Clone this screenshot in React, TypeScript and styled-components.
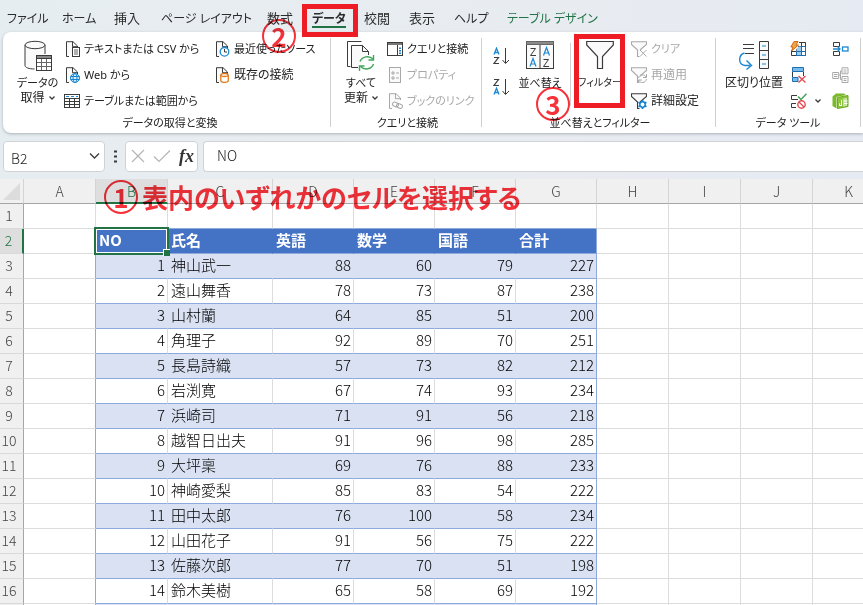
import React, { useEffect, useState } from 'react';
import styled, { createGlobalStyle, css } from 'styled-components';

const GlobalStyle = createGlobalStyle`
  * { box-sizing: border-box; }
  body { margin: 0; overflow: hidden; }
  button, input { font: inherit; color: inherit; }
  svg { display: block; flex: none; }
`;

const ink = '#3b3b3b';
const blue = '#1e88d2';
const green = '#217346';
const red = '#ee1c25';
const mute = '#a8a8a8';
const note = '#f5323a';

/* ---------- shell ---------- */

const Shell = styled.div`
  position: relative;
  display: flex;
  flex-direction: column;
  height: 100vh;
  overflow: hidden;
  background: linear-gradient(100deg, #e6edf0 0%, #e8ecf1 60%, #e5e9f2 100%);
  color: #222;
  font-family: 'Noto Sans', 'Noto Sans CJK JP', sans-serif;
  font-size: 12px;
  font-feature-settings: 'palt';
`;

const TabBar = styled.nav`
  display: flex;
  flex: none;
  height: 32px;
  padding-left: 7px;
`;

const TabSlot = styled.div<{ $w: number }>`
  position: relative;
  flex: 0 0 ${p => p.$w}px;
`;

const Tab = styled.button<{ $active?: boolean; $accent?: boolean; $kanji?: boolean }>`
  padding: ${p => (p.$kanji ? 8 : 9)}px 0 0;
  height: 28px;
  border: 0;
  background: none;
  white-space: nowrap;
  font-size: ${p => (p.$kanji ? 13 : 12)}px;
  line-height: 20px;
  color: ${p => (p.$accent ? green : '#2b2b2b')};
  ${p => p.$active && css`
    font-weight: 700;
    box-shadow: inset 0 -2px ${green};
  `}
`;

const Marker = styled.span<{ $inset: string }>`
  position: absolute;
  inset: ${p => p.$inset};
  z-index: 2;
  border: 5px solid ${red};
  pointer-events: none;
`;

/* ---------- ribbon ---------- */

const Ribbon = styled.section`
  display: flex;
  flex: none;
  height: 101px;
  margin-left: 3px;
  padding: 6px 0;
  background: #fff;
  border-radius: 8px 0 0 8px;
  box-shadow: 0 1px 3px rgba(60, 70, 80, 0.35);
`;

const Group = styled.div<{ $w: number; $pad: number }>`
  display: flex;
  flex-direction: column;
  flex: 0 0 ${p => p.$w}px;
  min-width: 0;
  padding-left: ${p => p.$pad}px;
  border-right: 1px solid #d0d0d0;
`;

const GroupBody = styled.div`
  display: flex;
  flex: none;
  height: 77px;
`;

const GroupLabel = styled.div<{ $pad: number }>`
  padding-right: ${p => p.$pad}px;
  font-size: 11px;
  line-height: 16px;
  text-align: center;
  white-space: nowrap;
`;

const BigButton = styled.button<{ $w: number }>`
  position: relative;
  display: flex;
  flex-direction: column;
  align-items: center;
  flex: 0 0 ${p => p.$w}px;
  min-width: 0;
  padding: 2px 0 0;
  border: 0;
  background: none;
  line-height: 15px;
  white-space: nowrap;
`;

const BigText = styled.span<{ $size?: number }>`
  display: flex;
  align-items: center;
  gap: 4px;
  font-size: ${p => p.$size ?? 12}px;
`;

const BigIcon = styled.span`
  height: 35px;
`;

const Stack = styled.div<{ $w: number; $left?: number }>`
  display: flex;
  flex-direction: column;
  flex: 0 0 ${p => p.$w}px;
  min-width: 0;
  margin-left: ${p => p.$left ?? 0}px;
  padding-top: 2px;
  gap: 8px;
`;

const SmallButton = styled.button<{ $size?: number }>`
  display: flex;
  align-items: center;
  gap: 4px;
  height: 18px;
  padding: 0;
  border: 0;
  background: none;
  white-space: nowrap;
  font-size: ${p => p.$size ?? 12}px;
  line-height: 18px;
  &:disabled { color: ${mute}; }
`;

const SortStack = styled.div`
  display: flex;
  flex-direction: column;
  gap: 13px;
  padding-top: 9px;
  flex: 0 0 24px;
`;

const IconButton = styled.button`
  display: flex;
  align-items: center;
  gap: 8px;
  min-height: 18px;
  padding: 0;
  border: 0;
  background: none;
`;

const InnerRule = styled.span`
  flex: 0 0 1px;
  margin: 5px 8px 9px 7px;
  background: #d0d0d0;
`;

/* ---------- formula bar ---------- */

const FormulaBar = styled.div`
  display: flex;
  flex: none;
  align-items: center;
  height: 46px;
  padding: 0 0 0 3px;
  font-size: 14px;
`;

const Field = styled.div<{ $w?: number }>`
  display: flex;
  align-items: center;
  flex: ${p => (p.$w ? `0 0 ${p.$w}px` : '1')};
  min-width: 0;
  height: 31px;
  border: 1px solid #d0d3d6;
  border-radius: 4px;
  background: #fff;
`;

const FormulaField = styled(Field)`
  margin-left: 5px;
  border-right: 0;
  border-radius: 4px 0 0 4px;
`;

const NameInput = styled.input`
  flex: 1;
  width: 100%;
  min-width: 0;
  padding: 3px 0 0 7px;
  border: 0;
  background: none;
  outline: 0;
  font-family: 'Noto Sans CJK JP', sans-serif;
  font-weight: 300;
`;

const NameArrow = styled(IconButton)`
  padding-right: 4px;
`;

const FormulaInput = styled(NameInput)`
  padding: 0 0 2px 13px;
`;

const Dots = styled.span`
  display: flex;
  justify-content: center;
  flex: 0 0 20px;
`;

/* ---------- sheet ---------- */

const SheetArea = styled.main`
  position: relative;
  flex: 1;
  min-height: 0;
  overflow: hidden;
  background: #fff;
`;

const Sheet = styled.table`
  width: 0;
  table-layout: fixed;
  border-collapse: separate;
  border-spacing: 0;
  font-family: 'Noto Sans CJK JP', sans-serif;
  font-size: 15px;
  font-weight: 300;
  font-feature-settings: normal;
  color: #000;
`;

const Col = styled.col<{ $w: number }>`
  width: ${p => p.$w}px;
`;

const Corner = styled.td`
  height: 25px;
  padding: 0 3px 3px 0;
  border-right: 1px solid #d4d4d4;
  border-bottom: 1px solid #a6a6a6;
  background: #f0f0f0;
  vertical-align: bottom;
  svg { margin-left: auto; }
`;

const ColHead = styled.th<{ $on: boolean }>`
  height: 25px;
  padding: 0;
  border-right: 1px solid #d4d4d4;
  border-bottom: ${p => (p.$on ? `2px solid ${green}` : '1px solid #a6a6a6')};
  background: ${p => (p.$on ? '#dedede' : '#f0f0f0')};
  color: ${p => (p.$on ? green : '#444')};
  font-size: 14px;
  font-weight: 300;
  line-height: 20px;
`;

const RowHead = styled.th<{ $on: boolean }>`
  height: 25px;
  padding: 0 5px 2px 0;
  border-right: ${p => (p.$on ? `2px solid ${green}` : '1px solid #a6a6a6')};
  border-bottom: 1px solid #d9d9d9;
  background: ${p => (p.$on ? '#dedede' : '#f0f0f0')};
  color: ${p => (p.$on ? green : '#444')};
  font-size: 14px;
  font-weight: 300;
  line-height: 20px;
`;

type Kind = 'plain' | 'head' | 'band' | 'white';

const fills: Record<Kind, string> = { plain: '#fff', head: '#4472c4', band: '#d9e1f2', white: '#fff' };

const Cell = styled.td<{ $kind: Kind; $right?: boolean; $edge?: boolean; $ruled?: boolean }>`
  position: relative;
  height: 25px;
  padding: 0 2px 2px 3px;
  background: ${p => fills[p.$kind]};
  border-bottom: 1px solid ${p => (p.$kind === 'plain' && !p.$ruled ? '#dcdcdc' : '#8ea9db')};
  border-right: 1px solid ${p =>
    p.$edge ? '#8ea9db' : p.$kind === 'plain' || p.$kind === 'white' ? '#dcdcdc' : fills[p.$kind]};
  color: ${p => (p.$kind === 'head' ? '#fff' : '#000')};
  font-weight: ${p => (p.$kind === 'head' ? 700 : 300)};
  text-align: ${p => (p.$right ? 'right' : 'left')};
  line-height: 20px;
  white-space: nowrap;
`;

const Selection = styled.span`
  position: absolute;
  inset: -2px;
  z-index: 1;
  border: 2px solid ${green};
  box-shadow: inset 0 0 0 1px #fff;
  &::after {
    content: '';
    position: absolute;
    right: -3px;
    bottom: -3px;
    width: 6px;
    height: 6px;
    border: solid #fff;
    border-width: 1px 0 0 1px;
    background: ${green};
  }
`;

/* ---------- callouts ---------- */

const Badge = styled.span`
  display: flex;
  align-items: center;
  justify-content: center;
  flex: none;
  width: 34px;
  height: 34px;
  border: 2px solid ${note};
  border-radius: 50%;
  line-height: 30px;
`;

const Callout = styled.div<{ $x: number; $y: number }>`
  position: absolute;
  left: ${p => p.$x}px;
  top: ${p => p.$y}px;
  z-index: 3;
  display: flex;
  align-items: center;
  gap: 4px;
  pointer-events: none;
  mix-blend-mode: multiply;
  white-space: nowrap;
  color: ${note};
  font-family: 'Noto Sans CJK JP', sans-serif;
  font-size: 26px;
  font-weight: 700;
  line-height: 32px;
`;

/* ---------- icons ---------- */

const Svg = ({ w, h, children }: { w: number; h: number; children: React.ReactNode }) => (
  <svg width={w} height={h} viewBox={`0 0 ${w} ${h}`} fill="none" stroke={ink} aria-hidden="true">
    {children}
  </svg>
);

const Chevron = ({ w = 6 }: { w?: number }) => (
  <Svg w={w} h={6}>
    <path d={w > 6 ? 'M1 .5l4.500 4.500 4.500-4.500' : 'M.5 1.500L3 4l2.500-2.500'} strokeWidth="1.300" />
  </Svg>
);

const DatabaseIcon = () => (
  <Svg w={28} h={32}>
    <path d="M1 5h20v10H12v14C5 29 1 27.500 1 25.500z" fill="#fafafa" stroke="none" />
    <path d="M1 5v20.500c0 2 4 3.500 9.500 3.500M21 5v9" />
    <ellipse cx="11" cy="5" rx="10" ry="3.700" fill="#fafafa" />
    <rect x="12.500" y="15.500" width="15" height="15" fill="#fff" />
    <rect x="12.500" y="15.500" width="15" height="3" fill="#8a8a8a" />
    <path d="M13 22.500h14M13 26.500h14M17.500 19v11M22.500 19v11" stroke="#666" />
  </Svg>
);

const RefreshIcon = () => (
  <Svg w={30} h={32}>
    <path d="M4.500 26.500h-3v-25h14" />
    <path d="M12 27.500H5.500v-22h11l6 6V15" fill="#fafafa" />
    <path d="M16.500 5.500v6h6" />
    <path d="M14 21.500c2-5 9-6.500 13-2.500M27.500 24c-2 5.500-9 6.500-13 2.500" stroke="#3fa55a" strokeWidth="1.400" />
    <path d="M27.500 15v5h-5M13.500 31v-5h5" stroke="#3fa55a" strokeWidth="1.400" />
  </Svg>
);

const SortIcon = () => (
  <Svg w={28} h={30}>
    <rect x=".5" y="1.500" width="27" height="27" fill="#fafafa" />
    <rect x=".5" y="1.500" width="27" height="3" fill="#8a8a8a" stroke="#666" />
    <path d="M14 5v24" />
    <path d="M4.500 8.500h5l-5 7h5.500M17.500 19.500h5l-5 7h5.500" />
    <path d="M4 26.500l3-8 3 8M5 24h4M17.500 15.500l3-8 3 8M18.500 13h4" stroke={blue} strokeWidth="1.200" />
  </Svg>
);

const FilterIcon = () => (
  <Svg w={28} h={30}>
    <path d="M.7 1.500h26.600v3.500L16.500 16.500v12h-5v-12L.7 5z" fill="#fafafa" strokeWidth="1.200" />
  </Svg>
);

const SplitIcon = () => (
  <Svg w={32} h={30}>
    <path d="M5 4.500h11M5 8.500h11M7 13.500h9" />
    <path d="M6.500 13C0 15 0 25 7 25.500h5M8.500 20.500l5 5-5 4" stroke={blue} strokeWidth="1.400" />
    <path d="M21.500 1.500h9v27h-9zM21.500 10.500h9M21.500 19.500h9" fill="#fafafa" />
    <path d="M24 6h4M24 15h4M24 24h4" stroke={blue} />
  </Svg>
);

const PagePath = ({ c = ink }: { c?: string }) => (
  <>
    <path d="M5 15.500H2.500V.7H9L13.500 5v2" stroke={c} fill="#fafafa" />
    <path d="M8.500.7v5h5" stroke={c} />
  </>
);

const CsvIcon = () => (
  <Svg w={16} h={16}>
    <PagePath />
    <rect x="8.500" y="6.500" width="7" height="9" fill="#fff" />
    <path d="M10 9h4M10 11h4M10 13h4" strokeWidth=".8" />
  </Svg>
);

const WebIcon = () => (
  <Svg w={16} h={16}>
    <PagePath />
    <circle cx="11" cy="11" r="4.500" fill="#d8eefb" stroke="#1683d0" />
    <path d="M6.500 9.500h9M6.500 12.500h9" stroke="#1683d0" />
    <ellipse cx="11" cy="11" rx="2" ry="4.500" stroke="#1683d0" />
  </Svg>
);

const TableIcon = () => (
  <Svg w={16} h={16}>
    <rect x=".5" y="1.500" width="15" height="13" />
    <path d="M1 5.500h14M1 8.500h14M1 11.500h14M5.500 5v9M10.500 5v9" />
    <path d="M2 3.500h3M7 3.500h3M12 3.500h2" stroke={blue} />
  </Svg>
);

const RecentIcon = () => (
  <Svg w={16} h={16}>
    <PagePath />
    <circle cx="10.500" cy="10.800" r="4.300" fill="#fff" stroke={blue} strokeWidth="1.300" />
    <path d="M10.500 8v3h2.500" />
  </Svg>
);

const ExistingIcon = () => (
  <Svg w={16} h={16}>
    <PagePath />
    <path d="M6.800 8v5.500c0 2.500 7.500 2.500 7.500 0V8" fill="#fff" stroke="#e27a1c" strokeWidth="1.300" />
    <ellipse cx="10.500" cy="8" rx="3.700" ry="1.500" fill="#fff" stroke="#e27a1c" strokeWidth="1.300" />
  </Svg>
);

const QueryIcon = () => (
  <Svg w={16} h={16}>
    <rect x=".5" y="1.500" width="15" height="13" fill="#fff" />
    <path d="M1 3h14" strokeWidth="2" stroke="#777" />
    <path d="M10.500 4v10" />
    <path d="M13 6.500v1.500M13 9v1.500M13 11.500v1.500" stroke={blue} strokeWidth="2" />
  </Svg>
);

const PropertyIcon = () => (
  <Svg w={16} h={16}>
    <rect x="2.500" y=".5" width="11" height="15" stroke={mute} fill="#fafafa" />
    <path d="M5 5h2v2H5zM5 10h2v2H5zM9 6h3M9 11h3" stroke={mute} />
  </Svg>
);

const LinkIcon = () => (
  <Svg w={16} h={16}>
    <PagePath c={mute} />
    <rect x="5.500" y="9.500" width="6" height="4" rx="2" stroke={mute} transform="rotate(20 8.500 11.500)" fill="#fff" />
    <rect x="9.500" y="11" width="6" height="4" rx="2" stroke={mute} transform="rotate(20 12.500 13)" />
  </Svg>
);

const AzIcon = ({ desc }: { desc?: boolean }) => (
  <Svg w={17} h={18}>
    <g transform={desc ? 'translate(0 9)' : undefined}>
      <path d="M1 7.500L3.500 1.200 6 7.500M2 5.500h3" stroke={blue} strokeWidth="1.300" />
    </g>
    <g transform={desc ? 'translate(0 -9)' : undefined}>
      <path d="M1 10.500h4.500L1 16.500h5" strokeWidth="1.200" />
    </g>
    <path d="M12.500 1v15M9.500 13l3 3.500 3.500-3.500" />
  </Svg>
);

const Funnel = ({ c = ink }: { c?: string }) => (
  <path d="M9.500 9.500v-1l6-5V.7H.5v2.800l6 5.500v6.500h2" stroke={c} fill="#fafafa" strokeWidth="1.100" />
);

const ClearIcon = () => (
  <Svg w={16} h={16}>
    <Funnel c={mute} />
    <path d="M9 9l6.500 6.500M15.500 9L9 15.500" stroke={mute} />
  </Svg>
);

const ReapplyIcon = () => (
  <Svg w={16} h={16}>
    <Funnel c={mute} />
    <path d="M7.500 11c1-4 6-4 7.500-1M15.500 12c-1 4.500-6 4.500-7.500 1.500M15.500 7v3.500H12M7.500 16v-3H11" stroke={mute} />
  </Svg>
);

const AdvancedIcon = () => (
  <Svg w={16} h={16}>
    <Funnel />
    <circle cx="11.500" cy="11.500" r="2.700" stroke="#1683d0" strokeWidth="1.500" fill="#fff" />
    <path d="M11.500 7v2M11.500 14v2M7.500 9.300l1.800 1M13.700 12.700l1.800 1M7.500 13.700l1.800-1M13.700 10.300l1.800-1" stroke="#1683d0" strokeWidth="1.800" />
  </Svg>
);

const FlashFillIcon = () => (
  <Svg w={17} h={16}>
    <path d="M9 1.500h6.500v13h-14V9M8 5.500h7M1.500 10.500h14M6.500 8v6M11.500 2v12" />
    <path d="M6.500 8l2-2.500h3v9h-5z" fill="#9ccdf0" stroke="none" />
    <path d="M11.500 5.500h4v9h-9v-4h9M11.500 5.500v9" stroke="#1d6fb0" />
    <path d="M4 .5h4L6 4h2.500L1.500 10l1.500-4H.8z" fill="#f2a34a" stroke="#d3690f" />
  </Svg>
);

const DuplicatesIcon = () => (
  <Svg w={17} h={16}>
    <path d="M2.500.5h11v4h-11zM2.500 10.500H8v4H2.500z" fill="#7cbbe8" stroke="#1d6fb0" />
    <path d="M2.500 5v5M13.500 5v4" />
    <path d="M8.500 9l7 6.500M15.500 9l-7 6.500" stroke="#e5484d" strokeWidth="1.300" />
  </Svg>
);

const ValidationIcon = () => (
  <Svg w={17} h={16}>
    <path d="M7 2.500H1.500v4H8M6 10.500H1.500v4H6" />
    <path d="M8 3.500l3 3L16.500.8" stroke="#3fa55a" strokeWidth="1.500" />
    <circle cx="11.500" cy="11.500" r="3.700" stroke="#e5484d" strokeWidth="1.400" fill="#fff" />
    <path d="M9 9l5 5" stroke="#e5484d" strokeWidth="1.300" />
  </Svg>
);

const ConsolidateIcon = () => (
  <Svg w={17} h={16}>
    <path d="M7.500 5.500V1.500h-6v4zM7.500 10.500v4h-6v-4z" />
    <path d="M1 8h7M5.500 5.500L8 8l-2.500 2.500" stroke={blue} strokeWidth="1.300" />
    <rect x="10.500" y="6" width="5.500" height="4" stroke={blue} strokeWidth="1.300" />
  </Svg>
);

const RelationIcon = () => (
  <Svg w={17} h={16}>
    <path d="M.7 5.500h6v6h-6zM10 .8h6v6h-6zM10 9.500h6v6h-6zM7 8h1.500V4H10M8.500 8v4.500H10" stroke={mute} />
    <path d="M2 7.500h3.500M2 9.500h3.500M11.500 3h3M11.500 5h3M11.500 11.700h3M11.500 13.500h3" stroke={mute} />
  </Svg>
);

const ModelIcon = () => (
  <Svg w={17} h={16}>
    <path d="M.5 3.500L4 .5h8l2 1.500-9.500 2V15.500L.5 13z" fill="#7ab929" stroke="none" />
    <path d="M5.500 4.500l10.500-2v11l-10.500 2z" fill="#8cc63f" stroke="#6ba81f" />
    <path d="M9.500 7v5.500H7.500v-2M12 5.500v8M14 5v8M12 8h3.500M12 10.500h3.500" stroke="#fff" />
  </Svg>
);

/* ---------- data ---------- */

const tabs: { text: string; w: number; active?: boolean; accent?: boolean; kanji?: boolean }[] = [
  { text: 'ファイル', w: 55 },
  { text: 'ホーム', w: 52 },
  { text: '挿入', w: 47, kanji: true },
  { text: 'ページ レイアウト', w: 106 },
  { text: '数式', w: 45, kanji: true },
  { text: 'データ', w: 52, active: true },
  { text: '校閲', w: 45, kanji: true },
  { text: '表示', w: 45, kanji: true },
  { text: 'ヘルプ', w: 53 },
  { text: 'テーブル デザイン', w: 96, accent: true },
];

const alphabet = 'ABCDEFGHIJKLMNOPQRSTUVWXYZ'.split('');
const headWidth = 24;
const rowHeight = 25;
const barsHeight = 179;
const colWidth = (l: string) => (l === 'C' ? 105 : 'DEFG'.includes(l) ? 81 : 72);

const titles = ['NO', '氏名', '英語', '数学', '国語', '合計'];
const records: [string, number, number, number, number][] = [
  ['神山武一', 88, 60, 79, 227],
  ['遠山舞香', 78, 73, 87, 238],
  ['山村蘭', 64, 85, 51, 200],
  ['角理子', 92, 89, 70, 251],
  ['長島詩織', 57, 73, 82, 212],
  ['岩渕寛', 67, 74, 93, 234],
  ['浜崎司', 71, 91, 56, 218],
  ['越智日出夫', 91, 96, 98, 285],
  ['大坪稟', 69, 76, 88, 233],
  ['神崎愛梨', 85, 83, 54, 222],
  ['田中太郎', 76, 100, 58, 234],
  ['山田花子', 91, 56, 75, 222],
  ['佐藤次郎', 77, 70, 51, 198],
  ['鈴木美樹', 65, 58, 69, 192],
];
const lastTableRow = 17;

/* Only the columns and rows that fit in the window are rendered. */
const measure = () => {
  let x = headWidth;
  const letters = alphabet.filter(l => {
    const visible = x < window.innerWidth;
    x += colWidth(l);
    return visible;
  });
  const space = window.innerHeight - barsHeight - rowHeight;
  return { letters, rows: Math.max(1, Math.floor(space / rowHeight)) };
};

const useVisibleRange = () => {
  const [range, setRange] = useState(measure);
  useEffect(() => {
    const update = () => setRange(measure());
    window.addEventListener('resize', update);
    return () => window.removeEventListener('resize', update);
  }, []);
  return range;
};

const cellValue = (row: number, col: number): string | number => {
  if (row === 2) return titles[col];
  const rec = records[row - 3];
  if (!rec) return '';
  return col === 0 ? row - 2 : rec[col - 1];
};

const SheetCell = ({ row, letter }: { row: number; letter: string }) => {
  const col = alphabet.indexOf(letter) - 1;
  const inside = row >= 2 && row <= lastTableRow && col >= 0 && col < 6;
  if (!inside) {
    const leftOfTable = letter === 'A' && row >= 2 && row <= lastTableRow;
    return <Cell $kind="plain" $edge={leftOfTable} $ruled={row === 1 && col >= 0 && col < 6} />;
  }
  const kind: Kind = row === 2 ? 'head' : row % 2 ? 'band' : 'white';
  return (
    <Cell $kind={kind} $right={row > 2 && col !== 1} $edge={col === 5}>
      {cellValue(row, col)}
      {row === 2 && col === 0 && <Selection />}
    </Cell>
  );
};

const SheetView = () => {
  const { letters, rows } = useVisibleRange();
  const numbers = Array.from({ length: rows }, (_, i) => i + 1);
  return (
    <Sheet>
      <colgroup>
        <Col $w={headWidth} />
        {letters.map(l => <Col key={l} $w={colWidth(l)} />)}
      </colgroup>
      <thead>
        <tr>
          <Corner>
            <svg width="17" height="17" viewBox="0 0 17 17" aria-hidden="true">
              <path d="M17 0v17H0z" fill="#dcdcdc" />
            </svg>
          </Corner>
          {letters.map(l => <ColHead key={l} scope="col" $on={l === 'B'}>{l}</ColHead>)}
        </tr>
      </thead>
      <tbody>
        {numbers.map(r => (
          <tr key={r}>
            <RowHead scope="row" $on={r === 2}>{r}</RowHead>
            {letters.map(l => <SheetCell key={l} row={r} letter={l} />)}
          </tr>
        ))}
        <tr>
          <RowHead scope="row" $on={false} />
          {letters.map(l => <SheetCell key={l} row={rows + 1} letter={l} />)}
        </tr>
      </tbody>
    </Sheet>
  );
};

export default function App() {
  return (
    <Shell>
      <GlobalStyle />
      <TabBar>
        {tabs.map(t => (
          <TabSlot key={t.text} $w={t.w}>
            <Tab $active={t.active} $accent={t.accent} $kanji={t.kanji}>{t.text}</Tab>
            {t.active && <Marker $inset="4px 6px -5px -10px" />}
          </TabSlot>
        ))}
      </TabBar>

      <Ribbon>
        <Group $w={328} $pad={11}>
          <GroupBody>
            <BigButton $w={47}>
              <BigIcon><DatabaseIcon /></BigIcon>
              <BigText $size={11}>データの</BigText>
              <BigText>取得<Chevron /></BigText>
            </BigButton>
            <Stack $w={150} $left={3}>
              <SmallButton $size={11}><CsvIcon />テキストまたは CSV から</SmallButton>
              <SmallButton $size={11}><WebIcon />Web から</SmallButton>
              <SmallButton $size={11}><TableIcon />テーブルまたは範囲から</SmallButton>
            </Stack>
            <Stack $w={110}>
              <SmallButton $size={11}><RecentIcon />最近使ったソース</SmallButton>
              <SmallButton><ExistingIcon />既存の接続</SmallButton>
            </Stack>
          </GroupBody>
          <GroupLabel $pad={4}>データの取得と変換</GroupLabel>
        </Group>

        <Group $w={151} $pad={7}>
          <GroupBody>
            <BigButton $w={46}>
              <BigIcon><RefreshIcon /></BigIcon>
              <BigText $size={11}>すべて</BigText>
              <BigText>更新<Chevron /></BigText>
            </BigButton>
            <Stack $w={90} $left={3}>
              <SmallButton $size={11}><QueryIcon />クエリと接続</SmallButton>
              <SmallButton $size={11} disabled><PropertyIcon />プロパティ</SmallButton>
              <SmallButton $size={11} disabled><LinkIcon />ブックのリンク</SmallButton>
            </Stack>
          </GroupBody>
          <GroupLabel $pad={4}>クエリと接続</GroupLabel>
        </Group>

        <Group $w={234} $pad={11}>
          <GroupBody>
            <SortStack>
              <IconButton aria-label="昇順"><AzIcon /></IconButton>
              <IconButton aria-label="降順"><AzIcon desc /></IconButton>
            </SortStack>
            <BigButton $w={46}>
              <BigIcon><SortIcon /></BigIcon>
              <BigText $size={11}>並べ替え</BigText>
            </BigButton>
            <InnerRule />
            <BigButton $w={42}>
              <BigIcon><FilterIcon /></BigIcon>
              <BigText $size={10}>フィルター</BigText>
              <Marker $inset="-4px -4px 7px -5px" />
            </BigButton>
            <Stack $w={80} $left={10}>
              <SmallButton $size={11} disabled><ClearIcon />クリア</SmallButton>
              <SmallButton disabled><ReapplyIcon />再適用</SmallButton>
              <SmallButton><AdvancedIcon />詳細設定</SmallButton>
            </Stack>
          </GroupBody>
          <GroupLabel $pad={8}>並べ替えとフィルター</GroupLabel>
        </Group>

        <Group $w={145} $pad={8}>
          <GroupBody>
            <BigButton $w={60}>
              <BigIcon><SplitIcon /></BigIcon>
              <BigText>区切り位置</BigText>
            </BigButton>
            <Stack $w={35} $left={6}>
              <SmallButton aria-label="フラッシュ フィル"><FlashFillIcon /></SmallButton>
              <SmallButton aria-label="重複の削除"><DuplicatesIcon /></SmallButton>
              <IconButton aria-label="データの入力規則"><ValidationIcon /><Chevron /></IconButton>
            </Stack>
            <Stack $w={20} $left={7}>
              <SmallButton aria-label="統合"><ConsolidateIcon /></SmallButton>
              <SmallButton aria-label="リレーションシップ" disabled><RelationIcon /></SmallButton>
              <SmallButton aria-label="データ モデルの管理"><ModelIcon /></SmallButton>
            </Stack>
          </GroupBody>
          <GroupLabel $pad={8}>データ ツール</GroupLabel>
        </Group>
      </Ribbon>

      <FormulaBar>
        <Field $w={102}>
          <NameInput aria-label="名前ボックス" defaultValue="B2" />
          <NameArrow aria-label="名前の一覧"><Chevron w={11} /></NameArrow>
        </Field>
        <Dots>
          <Svg w={3} h={13}>
            <path d="M0 1.500h3M0 6.500h3M0 11.500h3" strokeWidth="2" />
          </Svg>
        </Dots>
        <Field $w={73}>
          <IconButton aria-label="キャンセル、入力、関数の挿入">
            <Svg w={71} h={24}>
              <path d="M6 6l12 12M18 6L6 18M28 12.500l5 5L44 6.500" stroke="#b5b5b5" strokeWidth="1.200" />
              <text x="53" y="18" fill="#333" stroke="none" fontFamily="Liberation Serif, serif" fontStyle="italic" fontWeight="700" fontSize="18">fx</text>
            </Svg>
          </IconButton>
        </Field>
        <FormulaField>
          <FormulaInput aria-label="数式バー" defaultValue="NO" />
        </FormulaField>
      </FormulaBar>

      <SheetArea>
        <SheetView />
      </SheetArea>

      <Callout $x={104} $y={180}><Badge>1</Badge>表内のいずれかのセルを選択する</Callout>
      <Callout $x={262} $y={19}><Badge>2</Badge></Callout>
      <Callout $x={536} $y={87}><Badge>3</Badge></Callout>
    </Shell>
  );
}
